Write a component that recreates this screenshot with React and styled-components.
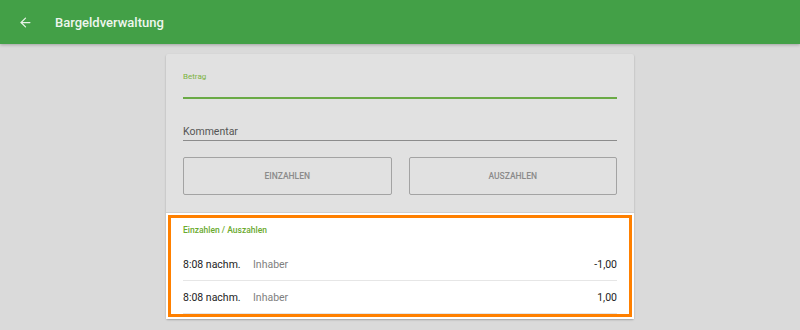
import React from 'react'
import styled, { createGlobalStyle } from 'styled-components'
import { ArrowLeft } from 'lucide-react'

const GlobalStyle = createGlobalStyle`
  body {
    margin: 0;
    background: #dadada;
    font-family: Roboto, 'Liberation Sans', sans-serif;
  }
`

const entries = [
  { time: '8:08 nachm.', who: 'Inhaber', amount: '-1,00' },
  { time: '8:08 nachm.', who: 'Inhaber', amount: '1,00' },
]

const App = () => {
  return (
    <Page>
      <GlobalStyle />
      <AppBar>
        <BackButton>
          <ArrowLeft size={15} strokeWidth={2} />
        </BackButton>
        <Title>Bargeldverwaltung</Title>
      </AppBar>
      <Main>
        <Card>
          <FormSection>
            <Field>
              <FloatLabel>Betrag</FloatLabel>
              <Line $active />
            </Field>
            <Field>
              <Placeholder>Kommentar</Placeholder>
              <Line />
            </Field>
            <Buttons>
              <ActionButton>Einzahlen</ActionButton>
              <ActionButton>Auszahlen</ActionButton>
            </Buttons>
          </FormSection>
          <ListSection>
            <ListTitle>Einzahlen / Auszahlen</ListTitle>
            {entries.map((e, i) => (
              <Row key={i}>
                <Time>{e.time}</Time>
                <Who>{e.who}</Who>
                <Amount>{e.amount}</Amount>
              </Row>
            ))}
          </ListSection>
        </Card>
      </Main>
    </Page>
  )
}

const Page = styled.div`
  width: 800px;
  height: 330px;
  overflow: hidden;
`

const AppBar = styled.header`
  height: 44px;
  background: #43a047;
  display: flex;
  align-items: center;
  padding-left: 17px;
  box-shadow: 0 1px 3px rgba(0, 0, 0, 0.25);
  position: relative;
  z-index: 1;
`

const BackButton = styled.div`
  width: 16px;
  height: 16px;
  display: flex;
  align-items: center;
  justify-content: center;
  color: #e8f3e8;
  margin-right: 22px;
`

const Title = styled.h1`
  margin: 0;
  font-size: 13px;
  font-weight: 500;
  color: #eef6ee;
`

const Main = styled.main`
  display: flex;
  justify-content: center;
  padding-top: 10px;
`

const Card = styled.section`
  width: 468px;
  background: #e1e1e1;
  box-shadow: 0 1px 2px rgba(0, 0, 0, 0.25);
  border-radius: 2px;
`

const FormSection = styled.div`
  padding: 12px 17px 17px;
  border-bottom: 1px solid #d0d0d0;
`

const Field = styled.div`
  display: flex;
  flex-direction: column;
  height: 33px;
  justify-content: flex-end;
  & + & {
    margin-top: 9px;
  }
`

const FloatLabel = styled.label`
  font-size: 8px;
  color: #7cb342;
  margin-bottom: 16px;
`

const Placeholder = styled.span`
  font-size: 10.5px;
  color: #555;
  margin-bottom: 2px;
`

const Line = styled.div`
  height: ${(p) => (p.$active ? '2px' : '1px')};
  background: ${(p) => (p.$active ? '#6aaa45' : '#8c8c8c')};
`

const Buttons = styled.div`
  display: grid;
  grid-template-columns: 1fr 1fr;
  gap: 17px;
  margin-top: 16px;
`

const ActionButton = styled.button`
  height: 38px;
  border: 1px solid #a3a3a3;
  border-radius: 2px;
  background: transparent;
  font-family: Roboto, 'Liberation Sans', sans-serif;
  font-size: 8.5px;
  font-weight: 500;
  text-transform: uppercase;
  color: #8a8a8a;
`

const ListSection = styled.div`
  background: #fff;
  padding: 9px 17px 5px;
  outline: 3px solid #ff8000;
  outline-offset: -5px;
`

const ListTitle = styled.div`
  font-size: 8.5px;
  font-weight: 500;
  color: #6aaa2e;
  height: 16px;
  line-height: 16px;
  margin-bottom: 10px;
`

const Row = styled.div`
  display: flex;
  align-items: center;
  height: 32px;
  border-bottom: 1px solid #e6e6e6;
  font-size: 10.5px;
`

const Time = styled.span`
  width: 70px;
  color: #222;
`

const Who = styled.span`
  flex: 1;
  color: #808080;
`

const Amount = styled.span`
  color: #222;
`

export default App
